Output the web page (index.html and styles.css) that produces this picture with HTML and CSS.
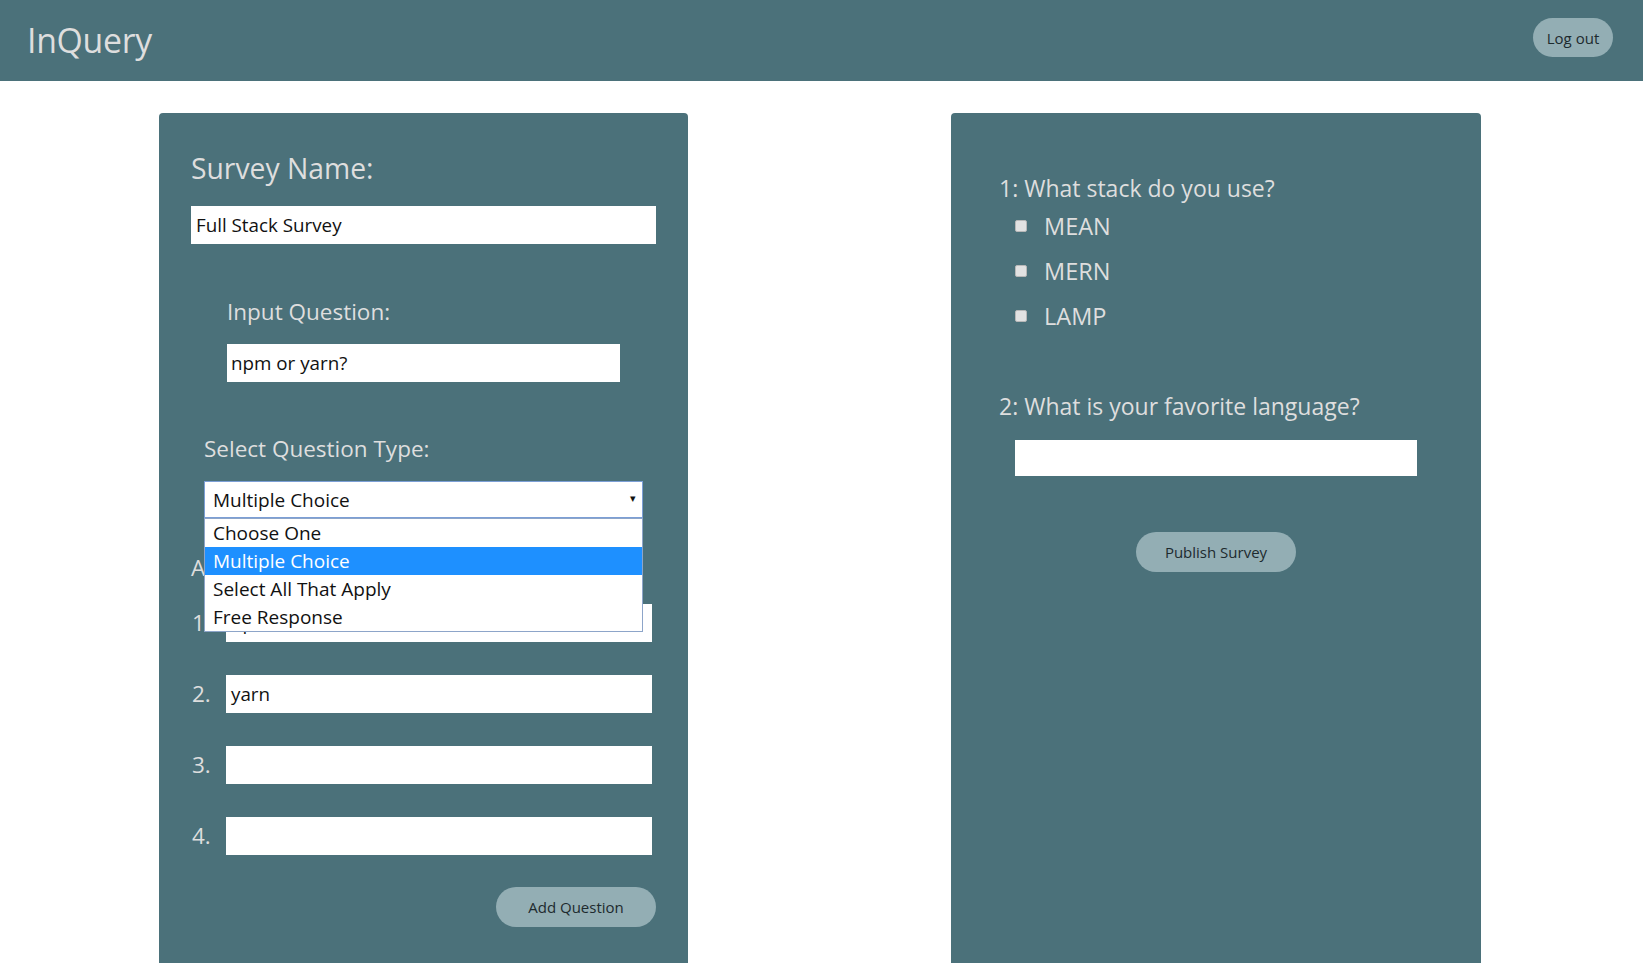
FILE: index.html
```html
<!DOCTYPE html>
<html lang="en">
<head>
<meta charset="utf-8">
<title>InQuery</title>
<link rel="stylesheet" href="styles.css">
</head>
<body>
<header class="topbar">
  <div class="brand">InQuery</div>
  <button class="pill logout">Log out</button>
</header>
<main class="main">
  <section class="panel builder">
    <h2 class="survey-label">Survey Name:</h2>
    <div class="field name-field">Full Stack Survey</div>

    <div class="block question-block">
      <div class="label">Input Question:</div>
      <div class="field q-field">npm or yarn?</div>
    </div>

    <div class="block type-block">
      <div class="label">Select Question Type:</div>
      <div class="select-wrap">
        <div class="select">
          <span>Multiple Choice</span>
          <span class="arrow">&#9662;</span>
        </div>
        <ul class="menu">
          <li>Choose One</li>
          <li class="active">Multiple Choice</li>
          <li>Select All That Apply</li>
          <li>Free Response</li>
        </ul>
      </div>
    </div>

    <div class="label answers-label">Answer Choices:</div>
    <div class="answers">
      <div class="answer"><span class="num">1.</span><div class="field a-field">npm</div></div>
      <div class="answer"><span class="num">2.</span><div class="field a-field">yarn</div></div>
      <div class="answer"><span class="num">3.</span><div class="field a-field"></div></div>
      <div class="answer"><span class="num">4.</span><div class="field a-field"></div></div>
    </div>
    <div class="actions">
      <button class="pill add">Add Question</button>
    </div>
  </section>

  <section class="panel preview">
    <div class="label q-title q1">1: What stack do you use?</div>
    <ul class="options">
      <li><span class="box"></span>MEAN</li>
      <li><span class="box"></span>MERN</li>
      <li><span class="box"></span>LAMP</li>
    </ul>
    <div class="label q-title q2">2: What is your favorite language?</div>
    <div class="field free-field"></div>
    <button class="pill publish">Publish Survey</button>
  </section>
</main>
</body>
</html>
```
FILE: styles.css
```css
html, body {
  margin: 0;
  padding: 0;
  overflow: hidden;
  background: #ffffff;
  font-family: "Open Sans", "Noto Sans", sans-serif;
}

.topbar {
  height: 81px;
  background: #4b717a;
  display: flex;
  justify-content: space-between;
  align-items: flex-start;
  padding: 0 30px 0 27px;
}

.brand {
  color: #dedede;
  font-size: 33.8px;
  line-height: 81px;
  letter-spacing: -0.3px;
}

.pill {
  border: none;
  background: #93aeb4;
  color: #1d2a2e;
  font-family: "Open Sans", "Noto Sans", sans-serif;
  font-size: 15px;
  border-radius: 20px;
  padding: 0;
  cursor: pointer;
}

.logout {
  width: 80px;
  height: 39px;
  margin-top: 18px;
}

.main {
  display: flex;
  justify-content: space-between;
  padding: 32px 162px 0 159px;
}

.panel {
  width: 530px;
  height: calc(100vh - 113px);
  background: #4b717a;
  border-radius: 4px 4px 0 0;
  box-sizing: border-box;
  color: #dedede;
}

.builder {
  width: 529px;
  padding: 0 32px;
}

.survey-label {
  margin: 35px 0 0 0;
  font-weight: normal;
  font-size: 28.3px;
  line-height: 40px;
}

.field {
  background: #ffffff;
  color: #111;
  font-size: 18.8px;
  line-height: 38px;
  height: 38px;
  padding: 0 5px;
  box-sizing: border-box;
  white-space: nowrap;
}

.name-field {
  margin-top: 18px;
}

.label {
  font-size: 22.5px;
  line-height: 32px;
}

.block {
  margin: 0 auto;
}

.question-block {
  width: 393px;
  margin-top: 52px;
}

.q-field {
  margin-top: 16px;
  padding-left: 4px;
}

.type-block {
  width: 439px;
  margin-top: 51px;
}

.select-wrap {
  position: relative;
  margin-top: 16px;
}

.select {
  height: 37px;
  box-sizing: border-box;
  border: 1px solid #7c9fd6;
  background: #ffffff;
  color: #111;
  font-size: 19px;
  padding: 0 6px 0 8px;
  display: flex;
  align-items: center;
  justify-content: space-between;
}

.arrow {
  font-size: 11px;
  color: #111;
  margin-top: -4px;
}

.menu {
  position: absolute;
  left: 0;
  right: 0;
  top: 37px;
  margin: 0;
  padding: 0;
  list-style: none;
  background: #ffffff;
  border: 1px solid #8da5c9;
  color: #111;
  font-size: 19px;
  z-index: 5;
}

.menu li {
  height: 28px;
  line-height: 28px;
  padding-left: 8px;
}

.menu li.active {
  background: #1e90ff;
  color: #ffffff;
}

.answers-label {
  margin-top: 34px;
}

.answers {
  margin-top: 20px;
  display: flex;
  flex-direction: column;
  gap: 33px;
}

.answer {
  display: flex;
  align-items: center;
}

.num {
  width: 34px;
  font-size: 22.5px;
  line-height: 38px;
  padding-left: 1px;
}

.a-field {
  width: 426px;
}

.actions {
  display: flex;
  justify-content: flex-end;
  margin-top: 32px;
}

.add {
  width: 160px;
  height: 40px;
}

.preview {
  padding: 0 48px;
}

.q-title {
  font-size: 23px;
}

.q1 {
  margin-top: 59px;
}

.options {
  list-style: none;
  margin: -1px 0 0 0;
  padding: 0 0 0 16px;
}

.options li {
  display: flex;
  align-items: center;
  height: 45px;
  font-size: 23.5px;
}

.box {
  width: 12px;
  height: 12px;
  box-sizing: border-box;
  background: #e2e2e2;
  border: 1px solid #b8b8b8;
  border-radius: 2px;
  margin-right: 17px;
  margin-top: 1px;
}

.q2 {
  margin-top: 52px;
}

.free-field {
  margin: 18px 0 0 16px;
  width: 402px;
  height: 36px;
}

.publish {
  display: block;
  width: 160px;
  height: 40px;
  margin: 56px auto 0 auto;
}
```
